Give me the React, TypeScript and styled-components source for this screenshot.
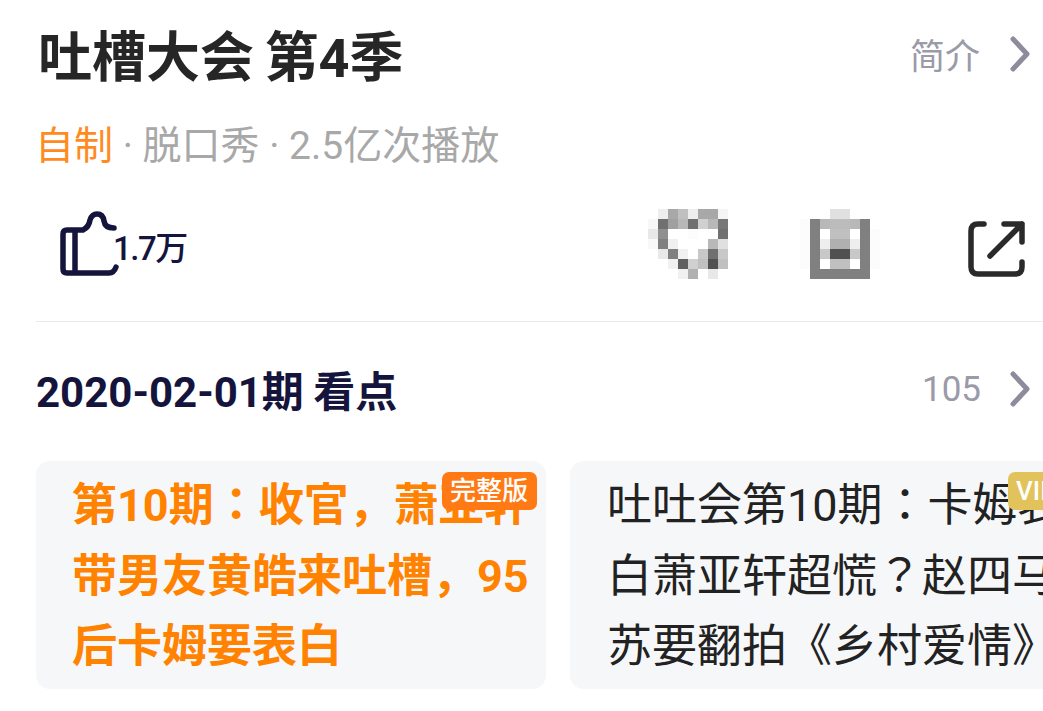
import React from 'react';
import styled, { createGlobalStyle } from 'styled-components';

const GlobalStyle = createGlobalStyle`
  html, body {
    margin: 0;
    padding: 0;
    background: #fff;
    overflow: hidden;
  }
  body {
    font-family: Roboto, "Noto Sans CJK SC", sans-serif;
  }
`;

const Page = styled.div`
  width: 1043px;
  height: 711px;
  overflow: hidden;
  padding: 25px 0 0 38px;
  box-sizing: border-box;
`;

const TitleRow = styled.div`
  display: flex;
  align-items: center;
  justify-content: space-between;
  height: 68px;
  padding-right: 13px;
`;

const Title = styled.h1`
  margin: 0;
  font-size: 54px;
  line-height: 68px;
  font-weight: 700;
  word-spacing: -3px;
  color: #262626;
`;

const MoreLink = styled.div`
  display: flex;
  align-items: center;
  gap: ${props => props.$gap}px;
  margin-bottom: ${props => props.$lift}px;
  color: #9a9aa8;
  font-size: ${props => props.$size}px;
`;

const Meta = styled.div`
  margin-top: 28px;
  margin-left: -3px;
  font-size: 39px;
  line-height: 50px;
  color: #a8a8a8;
`;

const Accent = styled.span`
  color: #ff8a1e;
`;

const ActionRow = styled.div`
  display: flex;
  align-items: flex-start;
  height: 151px;
  margin-left: -2px;
  padding-top: 38px;
  box-sizing: border-box;
  border-bottom: 1px solid #eaeaea;
`;

const LikeGroup = styled.div`
  display: flex;
  align-items: center;
  width: 612px;
  padding: 2px 0 0 24px;
  box-sizing: border-box;
  color: #14143c;
  font-size: 33px;
  font-weight: 500;
`;

const LikeCount = styled.span`
  margin-left: -7px;
  margin-top: 3px;
  letter-spacing: -1.5px;
`;

const IconSlot = styled.div`
  display: flex;
  width: ${props => props.$width}px;
`;

const ShareSlot = styled.div`
  display: flex;
  padding-top: 10px;
`;

const SectionRow = styled.div`
  display: flex;
  align-items: center;
  justify-content: space-between;
  height: 50px;
  margin-top: 41px;
  margin-left: -2px;
  padding-right: 13px;
`;

const SectionTitle = styled.h2`
  margin: 0;
  font-size: 42px;
  font-weight: 700;
  word-spacing: -1px;
  color: #14143c;
`;

const Cards = styled.div`
  display: flex;
  gap: 24px;
  margin-top: 48px;
  margin-left: -2px;
  width: 1100px;
`;

const Card = styled.div`
  position: relative;
  flex: none;
  box-sizing: border-box;
  width: ${props => props.$width}px;
  height: 228px;
  padding: 10px 0 0 ${props => (props.$active ? 36 : 37)}px;
  background: #f6f7f9;
  border-radius: 14px;
  overflow: hidden;
  font-family: Roboto, "Noto Sans CJK KR", sans-serif;
  font-size: 45px;
  line-height: 70.5px;
  font-weight: ${props => (props.$active ? 700 : 400)};
  color: ${props => (props.$active ? '#ff8200' : '#222')};
`;

const CardLine = styled.div`
  white-space: nowrap;
`;

const Badge = styled.div`
  position: absolute;
  top: 11px;
  right: ${props => props.$right}px;
  width: ${props => props.$width}px;
  height: 38px;
  display: flex;
  align-items: center;
  padding-left: 8px;
  box-sizing: border-box;
  border-radius: 7px;
  background: ${props => props.$color};
  color: #fff;
  font-family: Roboto, "Noto Sans CJK SC", sans-serif;
  font-size: 26px;
  font-weight: 500;
  line-height: 38px;
`;

const heartPixels = [
  ['#fff', '#eee', '#a8a8a8', '#c0c0c0', '#eee', '#a8a8a8', '#a8a8a8', '#f5f5f5'],
  ['#f8f8f8', '#707070', '#a0a0a0', '#b8b8b8', '#707070', '#d0d0d0', '#b8b8b8', '#787878'],
  ['#e8e8e8', '#909090', '#fff', '#fff', '#fcfcfc', '#fff', '#fff', '#707070'],
  ['#f8f8f8', '#808080', '#f0f0f0', '#fff', '#fff', '#fff', '#b8b8b8', '#e0e0e0'],
  ['#fff', '#e8e8e8', '#808080', '#f0f0f0', '#fff', '#c8c8c8', '#707070', '#c8c8c8'],
  ['#fff', '#fff', '#f0f0f0', '#606060', '#d0d0d0', '#c0c0c0', '#505050', '#c0c0c0'],
  ['#fff', '#fff', '#fff', '#f0f0f0', '#b0b0b0', '#fff', '#e8e8e8', '#fff'],
];

const bookmarkPixels = [
  ['#fff', '#fff', '#fff', '#e0e0e0', '#e0e0e0', '#fff', '#fff', '#fff'],
  ['#fcfcfc', '#808080', '#b8b8b8', '#bcbcbc', '#bcbcbc', '#b8b8b8', '#808080', '#fff'],
  ['#fcfcfc', '#808080', '#fff', '#c0c0c0', '#c0c0c0', '#fff', '#808080', '#fcfcfc'],
  ['#fcfcfc', '#808080', '#eee', '#b0b0b0', '#b0b0b0', '#eee', '#808080', '#fcfcfc'],
  ['#fcfcfc', '#808080', '#c8c8c8', '#505050', '#505050', '#c8c8c8', '#808080', '#fcfcfc'],
  ['#fcfcfc', '#808080', '#fff', '#c0c0c0', '#c0c0c0', '#fff', '#808080', '#fcfcfc'],
  ['#fff', '#808080', '#808080', '#808080', '#808080', '#808080', '#808080', '#fff'],
];

// the heart and bookmark are mosaiced in the source, so they are drawn block by block
const MosaicIcon = ({ pixels }: { pixels: string[][] }) => (
  <svg width="80" height="70" viewBox="0 0 8 7" shapeRendering="crispEdges">
    {pixels.map((row, y) =>
      row.map((fill, x) => <rect key={`${x}-${y}`} x={x} y={y} width="1" height="1" fill={fill} />)
    )}
  </svg>
);

const Chevron = () => (
  <svg width="20" height="36" viewBox="0 0 20 36" fill="none">
    <path d="M3 3 L17 18 L3 33" stroke="#8c8c9c" strokeWidth="5" strokeLinecap="round" strokeLinejoin="round" />
  </svg>
);

const ThumbIcon = () => (
  <svg width="60" height="66" viewBox="0 0 60 66" fill="none">
    <path
      d="M15 19 H7 Q3 19 3 23 V58 Q3 62 7 62 H49 Q54 62 56 56 M15 19 V62 M15 19 H23 Q29 16 30 9 Q32 3 37 3 Q43 3 44 10 Q45 17 54 17"
      stroke="#14143c"
      strokeWidth="5.5"
      strokeLinecap="round"
      strokeLinejoin="round"
    />
  </svg>
);

const ShareIcon = () => (
  <svg width="60" height="60" viewBox="0 0 60 60" fill="none">
    <path
      d="M16 5 H10 Q3 5 3 12 V48 Q3 55 10 55 H47 Q54 55 54 48 V43 M36 5 H54 V23 M54 5 L22 37"
      stroke="#2a2a2a"
      strokeWidth="5.5"
      strokeLinecap="round"
      strokeLinejoin="round"
    />
  </svg>
);

const App: React.FC = () => {
  return (
    <Page>
      <GlobalStyle />
      <TitleRow>
        <Title>吐槽大会 第4季</Title>
        <MoreLink $size={35} $gap={30} $lift={11}>
          简介
          <Chevron />
        </MoreLink>
      </TitleRow>
      <Meta>
        <Accent>自制</Accent> · 脱口秀 · 2.5亿次播放
      </Meta>
      <ActionRow>
        <LikeGroup>
          <ThumbIcon />
          <LikeCount>1.7万</LikeCount>
        </LikeGroup>
        <IconSlot $width={152}>
          <MosaicIcon pixels={heartPixels} />
        </IconSlot>
        <IconSlot $width={168}>
          <MosaicIcon pixels={bookmarkPixels} />
        </IconSlot>
        <ShareSlot>
          <ShareIcon />
        </ShareSlot>
      </ActionRow>
      <SectionRow>
        <SectionTitle>2020-02-01期 看点</SectionTitle>
        <MoreLink $size={35} $gap={29} $lift={-2}>
          105
          <Chevron />
        </MoreLink>
      </SectionRow>
      <Cards>
        <Card $width={510} $active>
          <CardLine>第10期：收官，萧亚轩</CardLine>
          <CardLine>带男友黄皓来吐槽，95</CardLine>
          <CardLine>后卡姆要表白</CardLine>
          <Badge $right={9} $width={95} $color="#ff7a14">完整版</Badge>
        </Card>
        <Card $width={520}>
          <CardLine>吐吐会第10期：卡姆表</CardLine>
          <CardLine>白萧亚轩超慌？赵四马</CardLine>
          <CardLine>苏要翻拍《乡村爱情》</CardLine>
          <Badge $right={7} $width={75} $color="#e2c25a">VIP</Badge>
        </Card>
      </Cards>
    </Page>
  );
};

export default App;
